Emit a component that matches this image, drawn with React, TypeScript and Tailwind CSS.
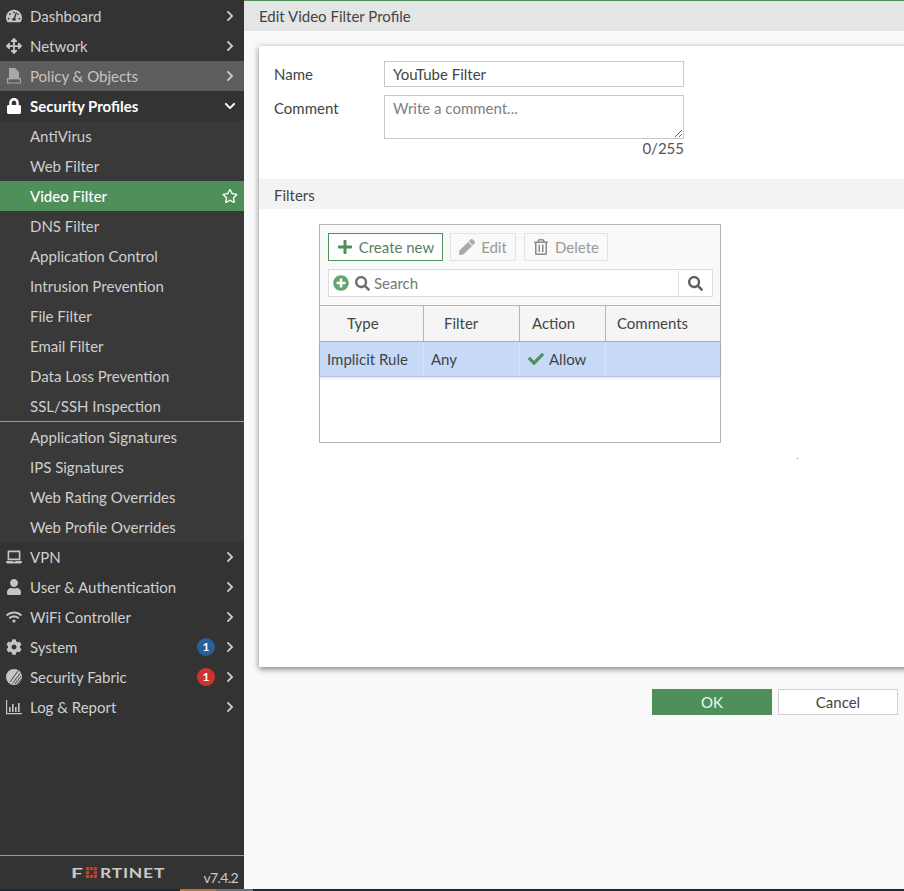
import React from 'react';
import { FaTachometerAlt, FaArrowsAlt, FaLock, FaUser, FaWifi, FaCog, FaChevronRight, FaChevronDown, FaLaptop, FaRegStar, FaPlus, FaPen, FaRegTrashAlt, FaSearch, FaPlusCircle, FaCheck } from 'react-icons/fa';

const MenuChevron = () => <FaChevronRight className="text-[12px] text-[#c8c8c8]" />;

const PolicyIcon = () => (
  <svg viewBox="0 0 16 16" className="h-4 w-4" fill="#a8a8a8">
    <path d="M3 0h6l4 4v6H3z" />
    <path d="M1 10h1.2v4.4h11.6V10H15v5.6H1z" />
    <path d="M2 10h12v1.4H2z" />
  </svg>
);

const FabricIcon = () => (
  <svg viewBox="0 0 16 16" className="h-4 w-4" fill="none">
    <circle cx="8" cy="8" r="8" fill="#c4c4c4" />
    <path d="M4 13 12 2M6.5 14.5 14 4.5M9 15 15 7M11.5 15 15.5 10" stroke="#333" strokeWidth="0.9" />
  </svg>
);

const ReportIcon = () => (
  <svg viewBox="0 0 16 16" className="h-4 w-4" fill="#c4c4c4">
    <path d="M0 1h1.2v13H16v1.2H0z" />
    <path d="M3 8h1.6v5H3zM6 5h1.6v8H6zM9 8h1.6v5H9zM12 4h1.6v9H12z" />
  </svg>
);

const Row = ({ icon, label, badge, active }: { icon: React.ReactNode; label: string; badge?: string; active?: boolean }) => (
  <div className={`flex h-[30px] items-center pl-[6px] pr-[8px] ${active ? 'bg-[#5d5d5d]' : ''}`}>
    <span className="flex w-4 justify-center text-[16px] text-[#c4c4c4]">{icon}</span>
    <span className={`ml-2 flex-1 ${active ? 'text-[#c4c4c4]' : 'text-[#cfcfcf]'}`}>{label}</span>
    {badge && (
      <span className={`mr-[9px] flex h-[18px] w-[18px] items-center justify-center rounded-full text-[12px] font-bold text-white ${badge === 'blue' ? 'bg-[#2a5f9e]' : 'bg-[#d2322d]'}`}>1</span>
    )}
    <MenuChevron />
  </div>
);

const SubRow = ({ label }: { label: string }) => (
  <div className="flex h-[30px] items-center pl-[30px] text-[#cfcfcf]">{label}</div>
);

const profileItems = ['AntiVirus', 'Web Filter'];
const profileItems2 = ['DNS Filter', 'Application Control', 'Intrusion Prevention', 'File Filter', 'Email Filter', 'Data Loss Prevention', 'SSL/SSH Inspection'];
const overrideItems = ['Application Signatures', 'IPS Signatures', 'Web Rating Overrides', 'Web Profile Overrides'];

const Sidebar = () => (
  <aside className="flex h-full w-[244px] shrink-0 flex-col bg-[#333333] pt-px text-[15px]">
    <Row icon={<FaTachometerAlt />} label="Dashboard" />
    <Row icon={<FaArrowsAlt />} label="Network" />
    <Row icon={<PolicyIcon />} label="Policy & Objects" active />
    <div className="flex h-[30px] items-center pl-[6px] pr-[8px]">
      <span className="flex w-4 justify-center text-[16px] text-white"><FaLock /></span>
      <span className="ml-2 flex-1 font-bold text-white">Security Profiles</span>
      <FaChevronDown className="text-[12px] text-white" />
    </div>
    <div className="bg-[#393939]">
      {profileItems.map(item => <SubRow key={item} label={item} />)}
      <div className="flex h-[30px] items-center bg-[#4f8f5a] pl-[30px] pr-[6px] font-medium text-white">
        <span className="flex-1">Video Filter</span>
        <FaRegStar className="text-[16px]" />
      </div>
      {profileItems2.map(item => <SubRow key={item} label={item} />)}
      <div className="border-t border-[#9a9a9a]">
        {overrideItems.map(item => <SubRow key={item} label={item} />)}
      </div>
    </div>
    <Row icon={<FaLaptop />} label="VPN" />
    <Row icon={<FaUser />} label="User & Authentication" />
    <Row icon={<FaWifi />} label="WiFi Controller" />
    <Row icon={<FaCog />} label="System" badge="blue" />
    <Row icon={<FabricIcon />} label="Security Fabric" badge="red" />
    <Row icon={<ReportIcon />} label="Log & Report" />
    <div className="mt-auto flex h-[34px] items-center border-t border-[#9a9a9a] pr-[6px]">
      <div className="ml-[71px] flex items-center text-[14px] font-bold tracking-[0.6px] text-[#c9c9c9]">
        <span className="origin-left scale-x-150">F</span>
        <svg viewBox="0 0 12 12" className="ml-[5px] mr-[2px] h-[11px] w-[13px]" fill="#c8402c">
          <path d="M0 0h3.5v3.5H0zM4.5 0h3v3.5h-3zM8.5 0H12v3.5H8.5zM0 4.5h3.5v3H0zM8.5 4.5H12v3H8.5zM0 8.5h3.5V12H0zM4.5 8.5h3V12h-3zM8.5 8.5H12V12H8.5z" />
        </svg>
        <span className="origin-left scale-x-125">RTINET</span>
      </div>
      <span className="ml-auto mt-[10px] text-[14px] tracking-[-0.6px] text-[#c9c9c9]">v7.4.2</span>
    </div>
  </aside>
);

const ToolButton = ({ icon, label, width }: { icon: React.ReactNode; label: string; width: string }) => (
  <div className={`flex h-[28px] items-center justify-center gap-[6px] border border-[#e2e2e2] pt-px text-[#9a9a9a] ${width}`}>
    {icon}
    {label}
  </div>
);

const FiltersTable = () => (
  <div className="ml-[60px] mt-[15px] h-[219px] w-[402px] border border-[#b5b5b5] bg-white">
    <div className="h-[80px] bg-[#f9f9f9] px-[8px] pt-[8px]">
      <div className="flex gap-[7px]">
        <div className="flex h-[28px] w-[115px] items-center justify-center gap-[6px] border border-[#4f8f5a] bg-white pt-px text-[#5c7f63]">
          <FaPlus className="text-[16px] text-[#4f8f5a]" />
          Create new
        </div>
        <ToolButton icon={<FaPen className="text-[16px] text-[#aaaaaa]" />} label="Edit" width="w-[66px]" />
        <ToolButton icon={<FaRegTrashAlt className="text-[16px] text-[#8a8a8a]" />} label="Delete" width="ml-px w-[84px]" />
      </div>
      <div className="mt-[8px] flex h-[28px] w-[385px] items-center border border-[#dcdcdc] bg-white pt-px">
        <FaPlusCircle className="ml-[4px] text-[16px] text-[#65a470]" />
        <FaSearch className="ml-[6px] text-[15px] text-[#6e6e6e]" />
        <span className="ml-[4px] flex-1 text-[#777777]">Search</span>
        <div className="flex h-full w-[34px] items-center justify-center border-l border-[#dcdcdc]">
          <FaSearch className="text-[15px] text-[#5f5f5f]" />
        </div>
      </div>
    </div>
    <div className="grid h-[37px] grid-cols-[104px_96px_86px_1fr] border-y border-[#b5b5b5] bg-[#f5f5f5] text-[#444444]">
      <div className="flex items-center border-r border-[#b5b5b5] pl-[27px]">Type</div>
      <div className="flex items-center border-r border-[#b5b5b5] pl-[20px]">Filter</div>
      <div className="flex items-center border-r border-[#b5b5b5] pl-[12px]">Action</div>
      <div className="flex items-center pl-[11px]">Comments</div>
    </div>
    <div className="grid h-[35px] grid-cols-[104px_96px_86px_1fr] border-b border-[#b9c6d8] bg-[#c6d9f7] pt-px text-[#444444] shadow-[0_1px_3px_rgba(0,0,0,0.15)]">
      <div className="flex items-center border-r border-[#d5e2f8] pl-[7px]">Implicit Rule</div>
      <div className="flex items-center border-r border-[#d5e2f8] pl-[7px]">Any</div>
      <div className="flex items-center gap-[5px] border-r border-[#d5e2f8] pl-[8px]">
        <FaCheck className="text-[16px] text-[#4f8f5a]" />
        Allow
      </div>
      <div />
    </div>
  </div>
);

const App = () => (
  <div className="flex h-[891px] w-[904px] flex-col overflow-hidden bg-[#1f2a30] font-['Lato',sans-serif] text-[15px]">
    <div className="flex h-[889px]">
      <Sidebar />
      <main className="flex-1 border-t border-[#4f8f5a] bg-[#f9f9f9]">
        <div className="flex h-[30px] items-center bg-[#e4e5e5] pl-[15px] text-[#444444]">Edit Video Filter Profile</div>
        <section className="relative ml-[15px] mt-[15px] h-[621px] w-[660px] bg-white text-[#444444] shadow-[0_2px_6px_rgba(0,0,0,0.5)]">
          <div className="flex pt-[15px]">
            <div className="w-[125px] pl-[15px] pt-[2px]">Name</div>
            <div className="flex h-[26px] w-[300px] items-center border border-[#c9c9c9] pl-[8px]">YouTube Filter</div>
          </div>
          <div className="mt-[8px] flex">
            <div className="w-[125px] pl-[15px] pt-[2px]">Comment</div>
            <div className="w-[300px]">
              <textarea
                readOnly
                placeholder="Write a comment..."
                className="block h-[44px] w-full border border-[#c9c9c9] px-[8px] py-[1px] placeholder:text-[#808080]"
              />
              <div className="-mt-[2px] text-right text-[#555555]">0/255</div>
            </div>
          </div>
          <div className="mt-[19px] flex h-[30px] items-center bg-[#f3f3f3] pl-[15px] pt-[3px]">Filters</div>
          <FiltersTable />
          <div className="absolute left-[538px] top-[412px] h-px w-px bg-[#777777]" />
        </section>
        <div className="ml-[408px] mt-[22px] flex gap-[6px]">
          <div className="flex h-[26px] w-[120px] items-center justify-center bg-[#4f8f5a] text-[#eef7ee]">OK</div>
          <div className="flex h-[26px] w-[120px] items-center justify-center border border-[#cfcfcf] bg-white text-[#444444]">Cancel</div>
        </div>
      </main>
    </div>
    <div className="flex h-[2px]">
      <div className="w-[180px]" />
      <div className="w-[36px] bg-[#b5763f]" />
      <div className="w-[37px] bg-[#6b7276]" />
    </div>
  </div>
);

export default App;
